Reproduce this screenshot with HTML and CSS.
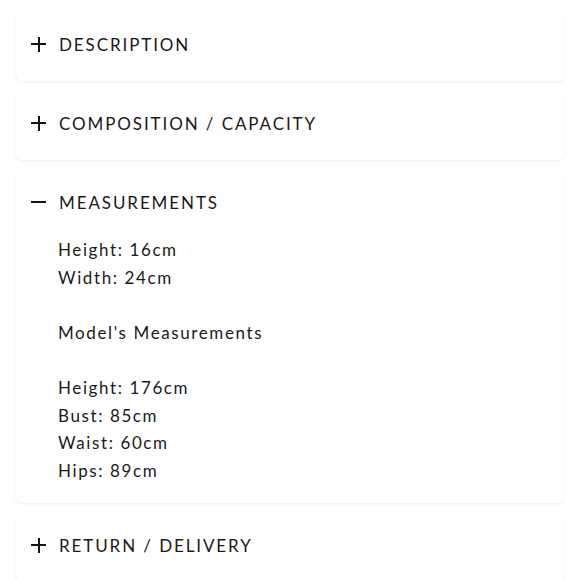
FILE: index.html
```html
<!DOCTYPE html>
<html>
<head>
<meta charset="utf-8">
<link rel="stylesheet" href="styles.css">
</head>
<body>
<div class="list">
  <section class="card">
    <div class="head"><span class="icon plus"></span><span class="title">DESCRIPTION</span></div>
  </section>
  <section class="card">
    <div class="head"><span class="icon plus"></span><span class="title">COMPOSITION / CAPACITY</span></div>
  </section>
  <section class="card open">
    <div class="head"><span class="icon minus"></span><span class="title">MEASUREMENTS</span></div>
    <div class="body">
      <p>Height: 16cm<br>Width: 24cm</p>
      <p>Model's Measurements</p>
      <p>Height: 176cm<br>Bust: 85cm<br>Waist: 60cm<br>Hips: 89cm</p>
    </div>
  </section>
  <section class="card">
    <div class="head"><span class="icon plus"></span><span class="title">RETURN / DELIVERY</span></div>
  </section>
</div>
</body>
</html>
```
FILE: styles.css
```css
html, body {
  margin: 0;
  background: #ffffff;
}
body {
  font-family: Lato, "Noto Sans", sans-serif;
  font-weight: 400;
  color: #1a1a1a;
}
.list {
  display: flex;
  flex-direction: column;
  gap: 11px;
  padding: 13px 16px;
}
.card {
  background: #fff;
  border-radius: 6px;
  box-shadow: 0 1px 3px rgba(0, 0, 0, 0.07), 0 0 1px rgba(0, 0, 0, 0.03);
}
.head {
  display: flex;
  align-items: center;
  gap: 13px;
  padding: 20px 15px 24px;
  line-height: 24px;
}
.open .head {
  padding-bottom: 21px;
}
.title {
  font-size: 17px;
  letter-spacing: 1.9px;
}
.icon {
  position: relative;
  width: 15px;
  height: 15px;
  flex: none;
  top: -1px;
}
.icon::before,
.icon::after {
  content: "";
  position: absolute;
  background: #151515;
}
.icon::before {
  left: 0;
  right: 0;
  top: 6.5px;
  height: 2px;
}
.plus::after {
  top: 0;
  bottom: 0;
  left: 6.5px;
  width: 2px;
}
.body {
  padding: 0 15px 19px 42px;
  font-size: 17px;
  line-height: 27.6px;
  letter-spacing: 1.6px;
}
.body p {
  margin: 0 0 27.6px;
}
.body p:last-child {
  margin-bottom: 0;
}
```
